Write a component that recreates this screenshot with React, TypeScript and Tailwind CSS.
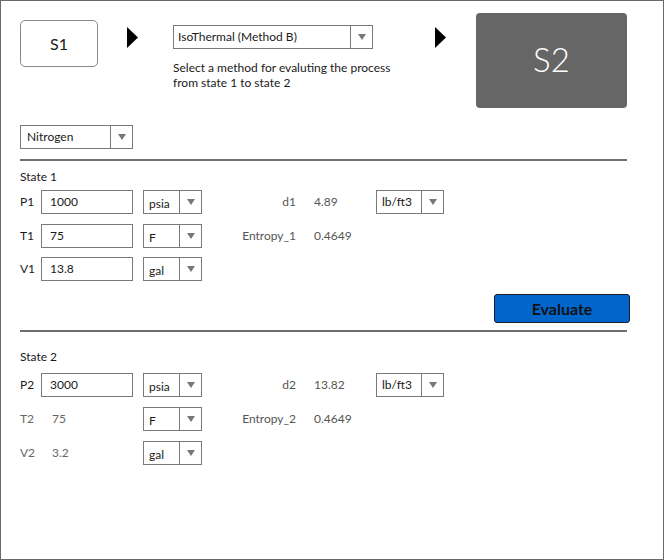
import React from "react";

const font = { fontFamily: 'Lato, "Open Sans", sans-serif' };

// small grey caret used in every combo box
function Caret() {
  return (
    <svg width="8" height="6" viewBox="0 0 8 6">
      <path d="M0 0 L8 0 L4 6 Z" fill="#777" />
    </svg>
  );
}

function Combo({ value, width, textPad = "pl-[5px]", low = true }: { value: string; width: string; textPad?: string; low?: boolean }) {
  return (
    <div className={`flex h-[24px] border border-[#7a7a7a] bg-white ${width}`}>
      <div className={`flex-1 flex items-center text-[12px] text-[#1a1a1a] ${textPad} ${low ? "pt-[3px]" : ""}`}>{value}</div>
      <div className="w-[22px] shrink-0 border-l border-[#7a7a7a] flex items-center justify-center">
        <Caret />
      </div>
    </div>
  );
}

function BigArrow() {
  return (
    <svg width="11" height="21" viewBox="0 0 11 21">
      <path d="M0 0 L11 10.5 L0 21 Z" fill="#000" />
    </svg>
  );
}

interface RowProps {
  label: string;
  value: string;
  editable: boolean;
  unit: string;
  propLabel?: string;
  propValue?: string;
  density?: boolean;
}

function StateRow({ label, value, editable, unit, propLabel, propValue, density }: RowProps) {
  return (
    <div className="flex items-center h-[24px] text-[12px]">
      <div className={`w-[21px] ${editable ? "text-[#1a1a1a]" : "text-[#666]"}`}>{label}</div>
      {editable ? (
        <div className="w-[92px] h-[24px] border border-[#7a7a7a] flex items-center pl-[8px] pb-[1px] text-[#1a1a1a]">{value}</div>
      ) : (
        <div className="w-[92px] pl-[11px] text-[#666]">{value}</div>
      )}
      <div className="ml-[10px]">
        <Combo value={unit} width="w-[59px]" />
      </div>
      <div className="w-[94px] text-right text-[#555]">{propLabel}</div>
      <div className="w-[80px] pl-[18px] text-[#555]">{propValue}</div>
      {density && <Combo value="lb/ft3" width="w-[68px]" low={false} />}
    </div>
  );
}

export default function App() {
  return (
    <div className="w-[664px] h-[560px] border border-[#6a6a6a] bg-white pl-[19px] overflow-hidden" style={font}>
      {/* top: S1 -> method -> S2 */}
      <div className="flex items-start h-[107px]">
        <div className="mt-[19px] w-[78px] h-[47px] rounded-[5px] border border-[#8a8a8a] flex items-center justify-center text-[16px] text-[#1a1a1a]">
          S1
        </div>
        <div className="ml-[29px] mt-[26px]">
          <BigArrow />
        </div>
        <div className="ml-[35px] mt-[24px] w-[262px]">
          <Combo value="IsoThermal (Method B)" width="w-[200px]" textPad="pl-[4px]" low={false} />
          <p className="mt-[11px] text-[12px] leading-[15px] text-[#1a1a1a]">
            Select a method for evaluting the process
            <br />
            from state 1 to state 2
          </p>
        </div>
        <div className="mt-[26px]">
          <BigArrow />
        </div>
        <div className="ml-[30px] mt-[12px] w-[151px] h-[95px] rounded-[4px] bg-[#666666] flex items-center justify-center text-white text-[33px] font-light pb-[2px]">
          S2
        </div>
      </div>

      <div className="mt-[17px]">
        <Combo value="Nitrogen" width="w-[113px]" textPad="pl-[6px]" low={false} />
      </div>

      <div className="mt-[10px] w-[607px] h-[2px] bg-[#6e6e6e]" />

      {/* state 1 */}
      <div className="mt-[8px] h-[16px] leading-[16px] text-[12px] text-[#1a1a1a]">State 1</div>
      <div className="mt-[5px]">
        <StateRow label="P1" value="1000" editable unit="psia" propLabel="d1" propValue="4.89" density />
      </div>
      <div className="mt-[10px]">
        <StateRow label="T1" value="75" editable unit="F" propLabel="Entropy_1" propValue="0.4649" />
      </div>
      <div className="mt-[9px]">
        <StateRow label="V1" value="13.8" editable unit="gal" />
      </div>

      <div className="mt-[13px] flex">
        <button className="ml-[474px] w-[136px] h-[29px] rounded-[3px] border border-[#1b1b2a] bg-[#0066cc] text-[16px] font-bold text-[#111] flex items-center justify-center">
          Evaluate
        </button>
      </div>

      <div className="mt-[7px] w-[607px] h-[2px] bg-[#6e6e6e]" />

      {/* state 2 */}
      <div className="mt-[17px] h-[16px] leading-[16px] text-[12px] text-[#1a1a1a]">State 2</div>
      <div className="mt-[8px]">
        <StateRow label="P2" value="3000" editable unit="psia" propLabel="d2" propValue="13.82" density />
      </div>
      <div className="mt-[10px]">
        <StateRow label="T2" value="75" editable={false} unit="F" propLabel="Entropy_2" propValue="0.4649" />
      </div>
      <div className="mt-[10px]">
        <StateRow label="V2" value="3.2" editable={false} unit="gal" />
      </div>
    </div>
  );
}
